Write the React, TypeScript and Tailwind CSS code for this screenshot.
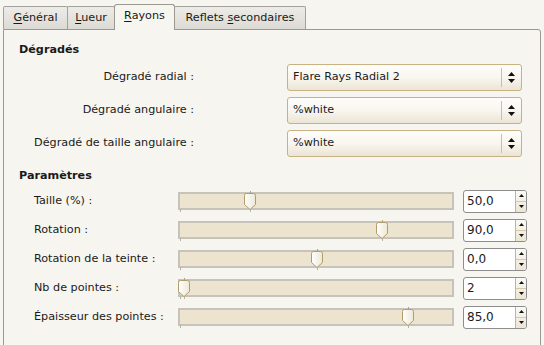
import React from 'react';

const tabs = [
  { pre: '', key: 'G', post: 'énéral', w: 'w-[65px]', active: false },
  { pre: '', key: 'L', post: 'ueur', w: 'w-[48px]', active: false },
  { pre: '', key: 'R', post: 'ayons', w: 'w-[61px]', active: true },
  { pre: 'Reflets\u00a0', key: 's', post: 'econdaires', w: 'w-[132px]', active: false },
];

const combos = [
  { label: 'Dégradé radial :', value: 'Flare Rays Radial 2' },
  { label: 'Dégradé angulaire :', value: '%white' },
  { label: 'Dégradé de taille angulaire :', value: '%white' },
];

// handle left offset inside the 276px trough
const sliders = [
  { label: 'Taille (%) :', value: '50,0', pos: 66 },
  { label: 'Rotation :', value: '90,0', pos: 198 },
  { label: 'Rotation de la teinte :', value: '0,0', pos: 133 },
  { label: 'Nb de pointes :', value: '2', pos: 0 },
  { label: 'Épaisseur des pointes :', value: '85,0', pos: 224 },
];

function ComboArrows() {
  return (
    <svg width="7" height="11" viewBox="0 0 7 11" aria-hidden>
      <path d="M3.5 0 L7 4 H0 Z" fill="#111" />
      <path d="M0 7 H7 L3.5 11 Z" fill="#111" />
    </svg>
  );
}

function Combo({ value }: { value: string }) {
  return (
    <div className="flex h-[27px] w-[235px] items-center rounded-[3px] border border-[#c8b283] bg-gradient-to-b from-[#fefdfb] via-[#f9f6ef] to-[#ebe5d5]">
      <span className="flex-1 pl-[5px]">{value}</span>
      <div className="h-[19px] w-px bg-[#cbbf9f]" />
      <div className="flex w-[19px] justify-center">
        <ComboArrows />
      </div>
    </div>
  );
}

function Handle() {
  return (
    <svg width="12" height="17" viewBox="0 0 12 17" aria-hidden>
      <defs>
        <linearGradient id="hg" x1="0" y1="0" x2="1" y2="0">
          <stop offset="0" stopColor="#ffffff" />
          <stop offset="1" stopColor="#ede7d6" />
        </linearGradient>
      </defs>
      <path d="M0.5 2.5 Q0.5 0.5 2.5 0.5 H9.5 Q11.5 0.5 11.5 2.5 V11.5 L6 16.5 L0.5 11.5 Z" fill="url(#hg)" stroke="#b49c68" />
    </svg>
  );
}

function Slider({ pos }: { pos: number }) {
  return (
    <div className="relative h-[22px] w-[276px]">
      <div className="mt-[2px] h-[18px] w-full border-2 border-[#c6c3bb] bg-[#ede4cf]" />
      <div className="absolute left-[2px] top-[19px] h-[3px] w-px bg-[#b5b2aa]" />
      <div className="absolute top-[19px] h-[3px] w-px bg-[#b5b2aa]" style={{ left: pos + 6 }} />
      <div className="absolute top-[1px] h-[2px] w-px bg-[#a8a59d]" style={{ left: pos + 6 }} />
      <div className="absolute top-[3px]" style={{ left: pos }}>
        <Handle />
      </div>
    </div>
  );
}

function SpinBox({ value }: { value: string }) {
  return (
    <div className="flex h-[23px] w-[64px] overflow-hidden rounded-[3px] border border-[#8d8d8d] bg-white">
      <span className="flex-1 pl-[3px] text-[12px] leading-[21px]">{value}</span>
      <div className="flex w-[11px] flex-col border-l border-[#c9b486] bg-gradient-to-b from-[#fbfaf6] to-[#ece5d2]">
        <div className="flex flex-1 items-center justify-center border-b border-[#d5c8a6]">
          <svg width="5" height="3" viewBox="0 0 5 3" aria-hidden>
            <path d="M2.5 0 L5 3 H0 Z" fill="#111" />
          </svg>
        </div>
        <div className="flex flex-1 items-center justify-center">
          <svg width="5" height="3" viewBox="0 0 5 3" aria-hidden>
            <path d="M0 0 H5 L2.5 3 Z" fill="#111" />
          </svg>
        </div>
      </div>
    </div>
  );
}

function TabLabel({ pre, k, post }: { pre: string; k: string; post: string }) {
  return (
    <span>
      {pre}
      <span className="underline underline-offset-2">{k}</span>
      {post}
    </span>
  );
}

export default function App() {
  return (
    <div className="h-[345px] w-[544px] overflow-hidden bg-[#f7f5ef] font-['DejaVu_Sans',sans-serif] text-[11.2px] text-[#1a1a1a]">
      <div className="flex h-[29px] items-end pl-[3px]">
        {tabs.map((t, i) =>
          t.active ? (
            <div
              key={i}
              className={`relative z-10 -mb-px -ml-px flex h-[26px] items-center justify-center rounded-t-[3px] border border-b-0 border-[#9b9890] bg-[#f7f5ef] pb-[2px] ${t.w}`}
            >
              <TabLabel pre={t.pre} k={t.key} post={t.post} />
            </div>
          ) : (
            <div
              key={i}
              className={`flex h-[23px] items-center justify-center rounded-t-[2px] border border-b-0 border-[#a3a19b] bg-gradient-to-b from-[#edece8] to-[#dcdad4] ${i > 0 ? '-ml-px' : ''} ${t.w}`}
            >
              <TabLabel pre={t.pre} k={t.key} post={t.post} />
            </div>
          ),
        )}
      </div>
      <div className="ml-[3px] h-[330px] w-[538px] rounded-tr-[3px] border border-[#9b9890]">
        <div className="mt-[13px] h-[14px] pl-[15px] font-bold leading-[14px]">Dégradés</div>
        <div className="mt-[7px] flex flex-col gap-[6px]">
          {combos.map((c) => (
            <div key={c.label} className="flex h-[27px] items-center">
              <div className="w-[190px] text-right">{c.label}</div>
              <div className="ml-[93px]">
                <Combo value={c.value} />
              </div>
            </div>
          ))}
        </div>
        <div className="mt-[12px] h-[14px] pl-[15px] font-bold leading-[14px]">Paramètres</div>
        <div className="mt-[7px] flex flex-col gap-[7px]">
          {sliders.map((s) => (
            <div key={s.label} className="flex h-[22px] items-center">
              <div className="w-[174px] pl-[30px]">{s.label}</div>
              <Slider pos={s.pos} />
              <div className="ml-[9px]">
                <SpinBox value={s.value} />
              </div>
            </div>
          ))}
        </div>
      </div>
    </div>
  );
}
